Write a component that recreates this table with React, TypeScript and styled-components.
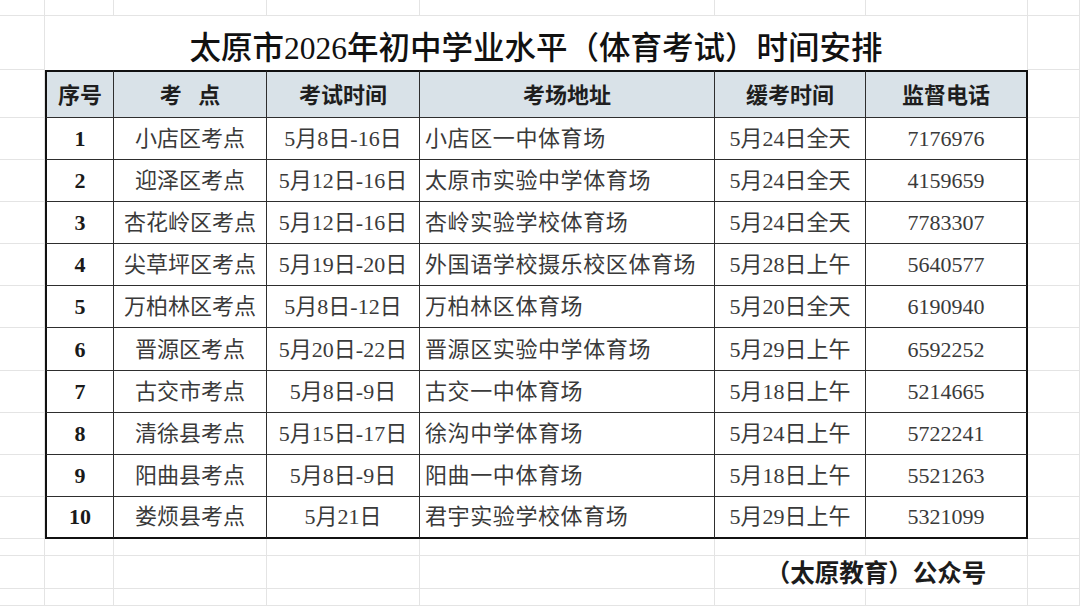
import React from 'react';
import styled, { createGlobalStyle } from 'styled-components';

type Row = {
  no: string;
  site: string;
  date: string;
  address: string;
  delay: string;
  phone: string;
}

const rows: Row[] = [
  { no: "1", site: "小店区考点", date: "5月8日-16日", address: "小店区一中体育场", delay: "5月24日全天", phone: "7176976" },
  { no: "2", site: "迎泽区考点", date: "5月12日-16日", address: "太原市实验中学体育场", delay: "5月24日全天", phone: "4159659" },
  { no: "3", site: "杏花岭区考点", date: "5月12日-16日", address: "杏岭实验学校体育场", delay: "5月24日全天", phone: "7783307" },
  { no: "4", site: "尖草坪区考点", date: "5月19日-20日", address: "外国语学校摄乐校区体育场", delay: "5月28日上午", phone: "5640577" },
  { no: "5", site: "万柏林区考点", date: "5月8日-12日", address: "万柏林区体育场", delay: "5月20日全天", phone: "6190940" },
  { no: "6", site: "晋源区考点", date: "5月20日-22日", address: "晋源区实验中学体育场", delay: "5月29日上午", phone: "6592252" },
  { no: "7", site: "古交市考点", date: "5月8日-9日", address: "古交一中体育场", delay: "5月18日上午", phone: "5214665" },
  { no: "8", site: "清徐县考点", date: "5月15日-17日", address: "徐沟中学体育场", delay: "5月24日上午", phone: "5722241" },
  { no: "9", site: "阳曲县考点", date: "5月8日-9日", address: "阳曲一中体育场", delay: "5月18日上午", phone: "5521263" },
  { no: "10", site: "娄烦县考点", date: "5月21日", address: "君宇实验学校体育场", delay: "5月29日上午", phone: "5321099" },
];

const headers = ["序号", "考\u2002 点", "考试时间", "考场地址", "缓考时间", "监督电话"];

const FONT = '"Liberation Serif", "Noto Sans CJK SC", serif';
const GRID = "#e4e4e4";
const INK = "#2e2e2e";
const EDGE = "#111";

const GlobalStyle = createGlobalStyle`
  html, body {
    margin: 0;
    padding: 0;
    background: #fff;
  }
  body {
    font-family: ${FONT};
  }
`;

// spreadsheet: margin col, 6 table cols, filler col
const Sheet = styled.div`
  display: grid;
  grid-template-columns: 45px 69px 153px 153px 295px 151px 162px 1fr;
  grid-template-rows: 16px 54px 48px repeat(10, 42.1px) 17px 33px 1fr;
  width: 1080px;
  height: 606px;
  overflow: hidden;
  background: #fff;
`;

const Blank = styled.div`
  box-sizing: border-box;
  border-right: 1px solid ${GRID};
  border-bottom: 1px solid ${GRID};
`;

const TitleCell = styled.div`
  grid-column: span 6;
  box-sizing: border-box;
  border-right: 1px solid ${GRID};
  display: flex;
  align-items: flex-end;
  justify-content: center;
  padding-bottom: 6px;
  font-size: 31.5px;
  line-height: 1;
  font-weight: 500;
  color: #111;
  white-space: nowrap;
`;

type Edge = {
  $l?: boolean;
  $r?: boolean;
  $t?: boolean;
  $b?: boolean;
}

const Cell = styled.div<Edge & { $left?: boolean }>`
  box-sizing: border-box;
  display: flex;
  align-items: center;
  justify-content: ${p => (p.$left ? 'flex-start' : 'center')};
  padding-left: ${p => (p.$left ? '5px' : '0')};
  border-top: ${p => (p.$t ? `2px solid ${EDGE}` : 'none')};
  border-left: ${p => (p.$l ? `2px solid ${EDGE}` : 'none')};
  border-right: ${p => (p.$r ? `2px solid ${EDGE}` : `1px solid ${INK}`)};
  border-bottom: ${p => (p.$b ? `2px solid ${EDGE}` : `1px solid ${INK}`)};
  white-space: pre;
  overflow: hidden;
  line-height: 1;
`;

const HeadCell = styled(Cell)`
  background: #d9e2e8;
  font-size: 22px;
  font-weight: 600;
  color: #1e1e1e;
  padding-top: 2px;
`;

const BodyCell = styled(Cell)<{ $strong?: boolean }>`
  font-size: 22px;
  font-weight: ${p => (p.$strong ? 700 : 400)};
  color: ${p => (p.$strong ? '#1a1a1a' : '#3a3a3a')};
  letter-spacing: ${p => (p.$left ? '0.6px' : '0')};
  padding-top: 1px;
`;

const FooterCell = styled.div`
  grid-column: span 2;
  box-sizing: border-box;
  border-right: 1px solid ${GRID};
  border-bottom: 1px solid ${GRID};
  display: flex;
  align-items: center;
  justify-content: center;
  padding-left: 10px;
  font-size: 24.5px;
  font-weight: 600;
  color: #1c1c1c;
  white-space: nowrap;
`;

const blanks = (n: number, key: string) =>
  Array.from({ length: n }, (_, i) => <Blank key={`${key}-${i}`} />);

const App = () => {
  const last = rows.length - 1;
  return (
    <>
      <GlobalStyle />
      <Sheet>
        {blanks(8, 'top')}

        <Blank />
        <TitleCell>太原市2026年初中学业水平（体育考试）时间安排</TitleCell>
        <Blank />

        <Blank />
        {headers.map((h, i) => (
          <HeadCell key={h} $t $l={i === 0} $r={i === headers.length - 1}>
            {h}
          </HeadCell>
        ))}
        <Blank />

        {rows.map((r, i) => {
          const b = i === last;
          return (
            <React.Fragment key={r.no}>
              <Blank />
              <BodyCell $l $b={b} $strong>{r.no}</BodyCell>
              <BodyCell $b={b}>{r.site}</BodyCell>
              <BodyCell $b={b}>{r.date}</BodyCell>
              <BodyCell $b={b} $left>{r.address}</BodyCell>
              <BodyCell $b={b}>{r.delay}</BodyCell>
              <BodyCell $b={b} $r>{r.phone}</BodyCell>
              <Blank />
            </React.Fragment>
          );
        })}

        {blanks(8, 'gap')}

        {blanks(5, 'foot')}
        <FooterCell>（太原教育）公众号</FooterCell>
        <Blank />

        {blanks(8, 'end')}
      </Sheet>
    </>
  );
}

export default App;
